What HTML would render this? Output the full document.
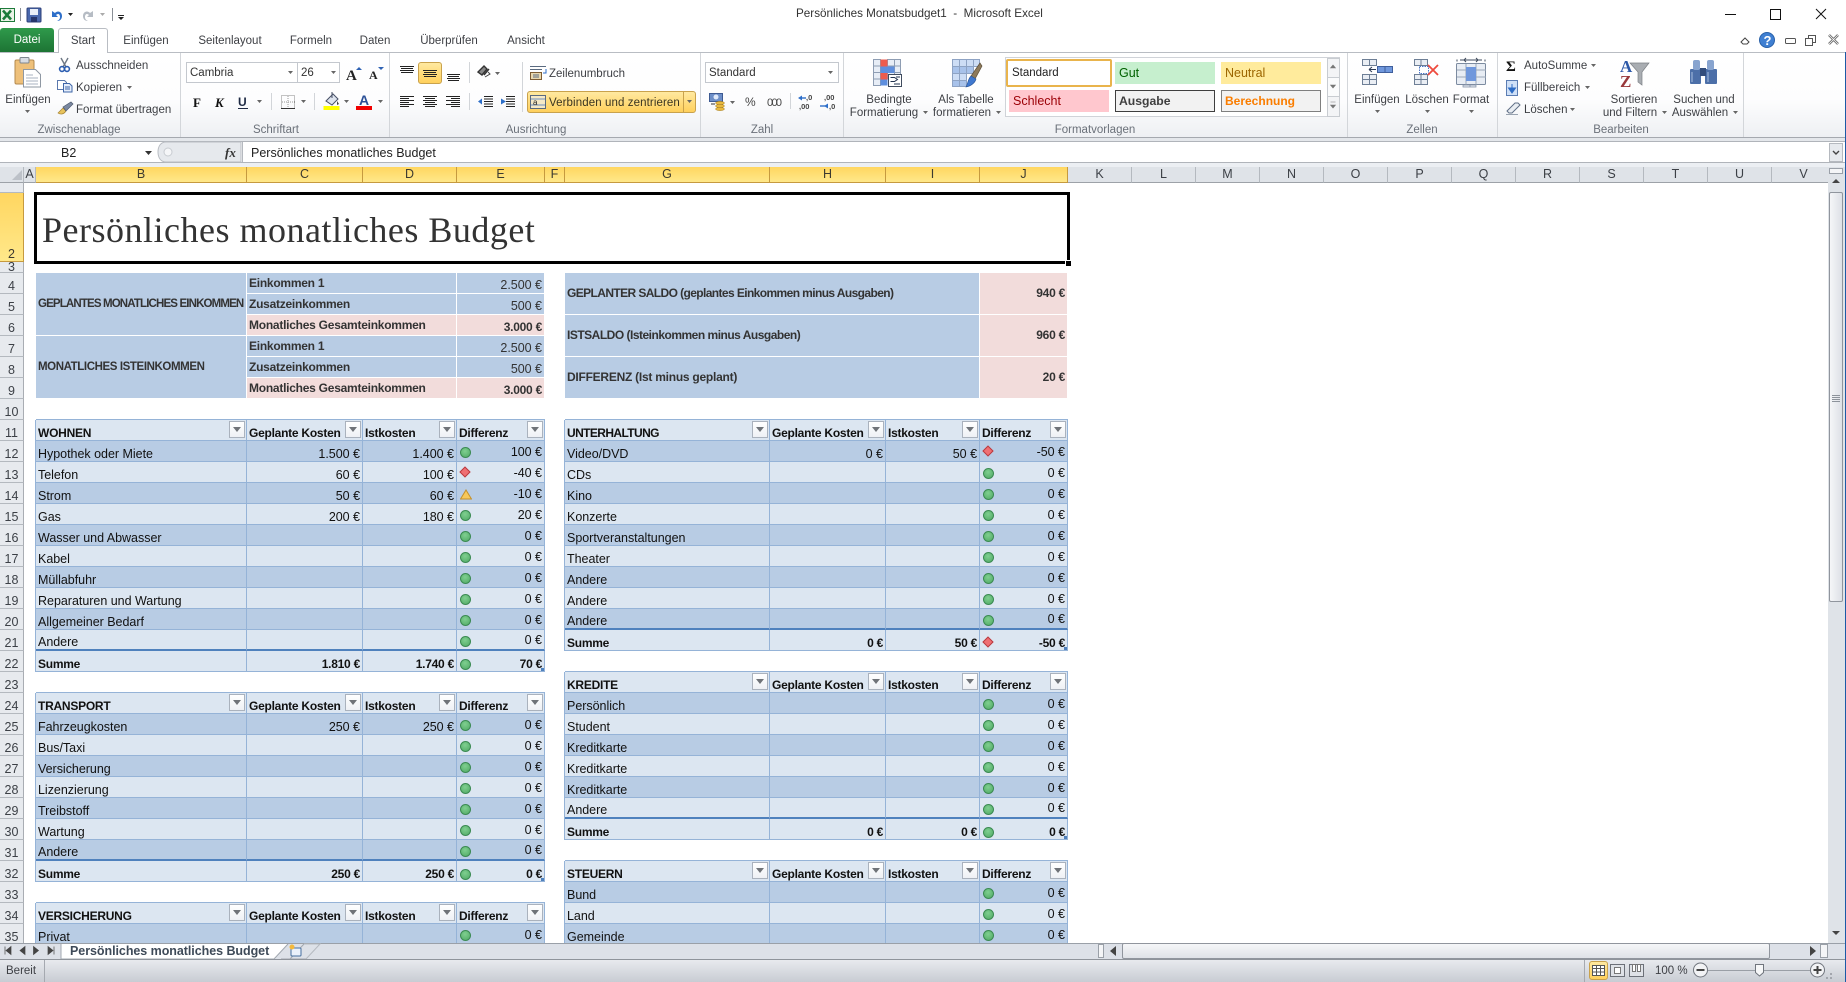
<!DOCTYPE html>
<html lang="de"><head><meta charset="utf-8"><title>Persönliches Monatsbudget1 - Microsoft Excel</title>
<style>
html,body{margin:0;padding:0;background:#fff}
body{position:relative;width:1846px;height:982px;overflow:hidden;font-family:"Liberation Sans",sans-serif;color:#222}
.abs,.t{position:absolute}
.t{white-space:nowrap;font-size:11.5px;line-height:14px;color:#3d3f44;margin-top:1px}
.n{margin-top:0}
.c{transform:translateX(-50%)}
.gl{color:#6a7079}
#rib{position:absolute;left:0;top:52px;width:1846px;height:85px;background:linear-gradient(#fff 0,#fdfdfe 55%,#eef0f3 100%);border-top:1px solid #b9bdc3;box-sizing:border-box}
.sep{position:absolute;top:53px;width:1px;height:84px;background:#d3d6da}
.box{position:absolute;background:#fff;border:1px solid #c4c8ce;box-sizing:border-box;font-size:11.5px;line-height:21px;padding-left:3px;color:#333}
.sty{position:absolute;box-sizing:border-box;font-size:12.5px;line-height:23px;padding-left:4px;width:100px;height:22px}
#sh{position:absolute;left:0;top:167px;width:1828px;height:776px;overflow:hidden;background:#fff}
table{border-collapse:separate;border-spacing:0;table-layout:fixed;width:1836px}
th,td{padding:0;box-sizing:border-box;white-space:nowrap;overflow:hidden;font-weight:normal}
tr{height:21px}
td{position:relative;font-size:12.5px;line-height:13px;vertical-align:bottom;padding:0 2px;color:#111;letter-spacing:-.02px}
.ch{height:16px;background:#dfe3e8;border-right:1px solid #b4b9bf;border-bottom:1px solid #9da2a8;text-align:center;font-size:12.5px;line-height:13px;color:#3c4046}
.rh{background:#e7eaee;border-right:1px solid #a9adb3;border-bottom:1px solid #b4b9bf;text-align:center;font-size:12.5px;color:#3c4046;vertical-align:bottom;line-height:13px}
.ch.ac,.rh.ac{background:linear-gradient(#ffd660,#ffe88a);border-right:1px solid #c69a3f;border-bottom:1px solid #c69a3f;color:#3c3a30}
.d,.l{border-right:1px solid #95b3d7;border-bottom:1px solid #95b3d7}
.d{background:#b8cce4}.l{background:#dce6f1}
.x{border-bottom:2px solid #4f81bd}
.r{text-align:right}
.b{font-weight:bold;font-size:12px;letter-spacing:-.25px}
.e{padding-bottom:2px}
.tb{border-bottom:1px solid #95b3d7;padding:0}
.al{border-right:1px solid #95b3d7;padding:0}
.s{background:#b8cce4;border-right:1px solid #fff;border-bottom:1px solid #fff;color:#333;line-height:15px}
.p{background:#f2dcdb;border-right:1px solid #fff;border-bottom:1px solid #fff;color:#333;line-height:15px}
.m{vertical-align:middle}
.f{position:absolute;right:1px;top:1px;width:16px;height:17px;box-sizing:border-box;background:linear-gradient(#fff,#eef1f5);border:1px solid #aab2bd}
.f:after{content:"";position:absolute;left:3px;top:5px;border:4px solid transparent;border-top:5px solid #6f7378;border-bottom:0}
.g{position:absolute;left:3px;top:6px;width:11px;height:11px;box-sizing:border-box;border-radius:50%;background:radial-gradient(circle at 45% 35%,#7fcf90,#4fa964);border:1px solid #3b8a52}
.su .g,.g.su{top:8px}
.q{position:absolute;left:4px;top:6px;width:8px;height:8px;box-sizing:border-box;background:#ef6f73;border:1px solid #b83b40;transform:rotate(45deg)}
.h{position:absolute;right:0;bottom:0;width:3px;height:3px;background:#4f81bd}
#sel{position:absolute;left:34px;top:192px;width:1036px;height:72px;box-sizing:border-box;border:3px solid #000;background:#fff}
#title{position:absolute;left:42px;top:208px;font-family:"Liberation Serif",serif;font-size:36px;letter-spacing:.5px;line-height:44px;color:#333;white-space:nowrap}
</style></head><body>

<div class="t n" style="left:796px;top:7px;font-size:11.7px;color:#333">Persönliches Monatsbudget1&nbsp; - &nbsp;Microsoft Excel</div>

<div id="rib"></div>
<div class="abs" style="left:0;top:28px;width:54px;height:24px;background:linear-gradient(#2f9a4b,#1d7434);border-radius:3px 3px 0 0;color:#fff;font-size:11.5px;line-height:24px;text-align:center">Datei</div>
<div class="abs" style="left:58px;top:28px;width:50px;height:25px;box-sizing:border-box;background:#fff;border:1px solid #b9bdc3;border-bottom:0;border-radius:3px 3px 0 0;font-size:11.5px;line-height:24px;text-align:center;color:#3d3f44">Start</div>
<div class="t c" style="left:146px;top:33px">Einfügen</div>
<div class="t c" style="left:230px;top:33px">Seitenlayout</div>
<div class="t c" style="left:311px;top:33px">Formeln</div>
<div class="t c" style="left:375px;top:33px">Daten</div>
<div class="t c" style="left:449px;top:33px">Überprüfen</div>
<div class="t c" style="left:526px;top:33px">Ansicht</div>

<div class="sep" style="left:180px"></div><div class="sep" style="left:389px"></div><div class="sep" style="left:700px"></div><div class="sep" style="left:843px"></div><div class="sep" style="left:1347px"></div><div class="sep" style="left:1497px"></div><div class="sep" style="left:1743px"></div>

<!-- active buttons and style boxes -->
<div class="abs" style="left:418px;top:62px;width:24px;height:22px;box-sizing:border-box;background:linear-gradient(#ffe9a0,#ffd05c);border:1px solid #c9a24c;border-radius:3px"></div>
<div class="abs" style="left:527px;top:91px;width:169px;height:22px;box-sizing:border-box;background:linear-gradient(#ffe9a0,#ffd05c);border:1px solid #c9a24c;border-radius:3px"></div>
<div class="abs" style="left:683px;top:92px;width:1px;height:20px;background:#c9a24c"></div>
<div class="box" style="left:186px;top:62px;width:112px;height:21px">Cambria</div>
<div class="box" style="left:297px;top:62px;width:43px;height:21px">26</div>
<div class="box" style="left:705px;top:62px;width:134px;height:21px">Standard</div>
<div class="abs" style="left:1005px;top:57px;width:335px;height:60px;box-sizing:border-box;background:#fff;border:1px solid #d0d3d8"></div>
<div class="sty" style="left:1006px;top:59px;width:106px;height:28px;background:#fff;border:2px solid #e9b44c;line-height:25px;padding-left:4px;color:#222;border-radius:2px;font-size:11.5px">Standard</div>
<div class="sty" style="left:1115px;top:62px;background:#c6efce;color:#006100">Gut</div>
<div class="sty" style="left:1221px;top:62px;background:#ffeb9c;color:#9c6500">Neutral</div>
<div class="sty" style="left:1009px;top:90px;background:#ffc7ce;color:#9c0006">Schlecht</div>
<div class="sty" style="left:1115px;top:90px;background:#f2f2f2;border:1px solid #3f3f3f;color:#3f3f3f;font-weight:bold;font-size:12.2px;line-height:20px;padding-left:3px">Ausgabe</div>
<div class="sty" style="left:1221px;top:90px;background:#f2f2f2;border:1px solid #7f7f7f;color:#fa7d00;font-weight:bold;font-size:12px;line-height:20px;padding-left:3px">Berechnung</div>
<div class="abs" style="left:1327px;top:58px;width:13px;height:59px;box-sizing:border-box;background:#f3f4f6;border:1px solid #c8ccd1"></div>
<div class="abs" style="left:1327px;top:77px;width:13px;height:20px;box-sizing:border-box;background:#fafbfc;border:1px solid #c8ccd1"></div>

<svg class="abs" style="left:0;top:0" width="1846" height="167" viewBox="0 0 1846 167">
<!-- quick access -->
<rect x=".5" y="8.5" width="14" height="13" fill="#eaf3e7" stroke="#1d7a3a"/><path d="M3 10.5l8 9M11 10.5l-8 9" stroke="#1b7c3b" stroke-width="2.6" fill="none"/>
<path d="M20.5 8v13M112.5 8v13" stroke="#8a8f96"/>
<rect x="27" y="8" width="14" height="14" rx="1" fill="#4a68ad" stroke="#2c3f78"/><rect x="30" y="9" width="8" height="6" fill="#e9eef8"/><rect x="31" y="17" width="6" height="5" fill="#26356a"/>
<path d="M52 11v6h6l-2-2c2-2 4-1 4 2 0 2-1 3-3 4 4 0 5-3 5-5 0-4-4-6-7-3z" fill="#2e6fc9"/>
<path d="M93 11v6h-6l2-2c-2-2-4-1-4 2 0 2 1 3 3 4-4 0-5-3-5-5 0-4 4-6 7-3z" fill="#b6bcc4"/>
<path d="M68 13h5l-2.500 3zM118 15h6v1h-6zM118 17h6l-3 3z" fill="#222"/><path d="M100 13h5l-2.500 3z" fill="#aaa"/>
<!-- paste -->
<rect x="15" y="60" width="19" height="24" rx="1.500" fill="#eec07a" stroke="#b48a4e"/><rect x="20" y="57.500" width="9" height="5.500" rx="1" fill="#d8dce2" stroke="#7f868f"/>
<path d="M23.500 69.500h12l5 5v12.500h-17z" fill="#fff" stroke="#8f98a3"/><path d="M26 75h7M26 78h12M26 81h12M26 84h12" stroke="#a9b3c0"/>
<!-- scissors -->
<path d="M61 58l5 9M68 58l-5 9" stroke="#6d7784" stroke-width="1.400"/><circle cx="62" cy="69" r="2.400" fill="none" stroke="#2a5cb0" stroke-width="1.600"/><circle cx="67" cy="69" r="2.400" fill="none" stroke="#2a5cb0" stroke-width="1.600"/>
<!-- copy -->
<path d="M57.500 80.500h7l2 2v7h-9z" fill="#fff" stroke="#5a78ad"/><path d="M63.500 83.500h6l2.500 2.500v6h-8.500z" fill="#e6eefb" stroke="#3f66a8"/><path d="M65 87h5M65 89h5" stroke="#3f66a8"/>
<!-- brush -->
<path d="M58 113l5-5 3 3c-2 3-5 4-8 2z" fill="#e8c35d" stroke="#a58232" stroke-width=".7"/><path d="M63 107l8-5 2 2-7 7z" fill="#7a88a0" stroke="#4d596e" stroke-width=".7"/>
<!-- Font -->
<text x="346" y="80" font-family="Liberation Serif,serif" font-weight="bold" font-size="15" fill="#222">A</text><path d="M356 70h6l-3-3z" fill="#2e62b4"/>
<text x="369" y="79" font-family="Liberation Serif,serif" font-weight="bold" font-size="12" fill="#222">A</text><path d="M378 67h6l-3 3z" fill="#2e62b4"/>
<text x="193" y="107" font-family="Liberation Serif,serif" font-weight="bold" font-size="13" fill="#111">F</text>
<text x="215" y="107" font-family="Liberation Serif,serif" font-weight="bold" font-style="italic" font-size="13" fill="#111">K</text>
<text x="238" y="106" font-family="Liberation Sans,sans-serif" font-weight="bold" font-size="12" fill="#1e2a44">U</text><path d="M238 108.500h10" stroke="#1e2a44"/>
<path d="M271.500 93v17M314.500 93v17M469.500 62v21M522.500 62v50M469.500 93v17M790.500 93v16" stroke="#d2d5d9"/>
<rect x="281.500" y="95.500" width="13" height="13" fill="none" stroke="#888" stroke-dasharray="1 1"/><path d="M288 96v13M282 102h13" stroke="#999" stroke-dasharray="1 1"/><path d="M281 108.500h14" stroke="#333"/>
<path d="M326 101l7-7 5 5-6 6z" fill="#dde3ee" stroke="#475066" stroke-width="1"/><path d="M332 92v6" stroke="#475066"/><path d="M337 101l2 3-2 1z" fill="#444"/><rect x="323.500" y="106" width="16" height="4" fill="#ffff00"/>
<text x="359" y="105" font-family="Liberation Sans,sans-serif" font-weight="bold" font-size="14" fill="#2a4f96">A</text><rect x="356" y="106" width="16" height="4" fill="#f00000"/>
<!-- Alignment -->
<path d="M400 66.500h14M401 68.500h12M400 70.500h14M401 72.500h12M423 70.500h14M424 72.500h12M423 74.500h14M424 76.500h12M447 74.500h13M448 76.500h11M447 78.500h13M448 80.500h11" stroke="#222" fill="none"/>
<path d="M400 96.500h14M400 98.500h9M400 100.500h14M400 102.500h9M400 104.500h14M400 106.500h9M423 96.500h14M425 98.500h10M423 100.500h14M425 102.500h10M423 104.500h14M425 106.500h10M446 96.500h14M451 98.500h9M446 100.500h14M451 102.500h9M446 104.500h14M451 106.500h9" stroke="#222" fill="none"/>
<path d="M478 72l6-6 3 3-5 6zM484 75l5-6" stroke="#333" stroke-width="1.400" fill="#888"/><path d="M485 77l5-3-2-2" fill="none" stroke="#444"/>
<path d="M484 96.500h9M484 99h9M484 101.500h9M484 104h9M484 106.500h9M506 96.500h9M506 99h9M506 101.500h9M506 104h9M506 106.500h9" stroke="#222" fill="none"/><path d="M478 101.500l4-3v6zM506 101.500l-5-3v6z" fill="#2e6fc9"/>
<!-- wrap -->
<rect x="530.500" y="72.500" width="11" height="7" fill="#e9d9b0" stroke="#7d5c32"/><path d="M530 66.500h16M530 69.500h12M533 75h6M533 77h6" stroke="#5a6a80"/><path d="M546 69v4h-3" fill="none" stroke="#2e6fc9"/>
<rect x="530.500" y="95.500" width="15" height="13" fill="#f6e9c6" stroke="#5a6a80"/><path d="M531 99h14M531 105h14" stroke="#6f8fbd"/><text x="533" y="105" font-size="8" fill="#222" font-family="Liberation Sans,sans-serif">a</text>
<!-- number -->
<rect x="709.500" y="93.500" width="13" height="8" fill="#6c8ec8" stroke="#3d5a92"/><circle cx="716" cy="97" r="2.500" fill="#dfe9fa"/><ellipse cx="720" cy="103" rx="4.500" ry="1.600" fill="#e8b93f" stroke="#a67d1f" stroke-width=".5"/><ellipse cx="720" cy="106" rx="4.500" ry="1.600" fill="#e8b93f" stroke="#a67d1f" stroke-width=".5"/><ellipse cx="720" cy="109" rx="4.500" ry="1.600" fill="#e8b93f" stroke="#a67d1f" stroke-width=".5"/><path d="M711 104h4" stroke="#333"/>
<text x="745" y="106" font-size="12" fill="#444" font-family="Liberation Sans,sans-serif">%</text>
<text x="767" y="106" font-size="11" fill="#444" font-family="Liberation Sans,sans-serif" textLength="15">000</text>
<text x="806" y="100" font-size="7.500" font-weight="bold" fill="#444" font-family="Liberation Sans,sans-serif">,0</text><text x="799" y="109" font-size="7.500" font-weight="bold" fill="#444" font-family="Liberation Sans,sans-serif">,00</text><path d="M798 98l4-2.500v5z" fill="#2e6fc9"/><path d="M802 98h4" stroke="#2e6fc9" stroke-width="1.400"/>
<text x="824" y="100" font-size="7.500" font-weight="bold" fill="#444" font-family="Liberation Sans,sans-serif">,00</text><text x="829" y="109" font-size="7.500" font-weight="bold" fill="#444" font-family="Liberation Sans,sans-serif">,0</text><path d="M828 106l-4-2.500v5z" fill="#2e6fc9" transform="translate(0 0) rotate(180 826 106)"/><path d="M820 106h5" stroke="#2e6fc9" stroke-width="1.400"/>
<!-- conditional -->
<g stroke="#8e9db3" fill="#e7edf6"><rect x="873.500" y="59.500" width="7" height="6.500"/><rect x="873.500" y="66" width="7" height="6.500"/><rect x="873.500" y="72.500" width="7" height="6.500"/><rect x="873.500" y="79" width="7" height="6.500"/><rect x="887.500" y="59.500" width="7" height="6.500"/><rect x="894.500" y="59.500" width="6" height="6.500"/><rect x="887.500" y="66" width="7" height="6.500"/><rect x="894.500" y="66" width="6" height="6.500"/><rect x="887.500" y="72.500" width="7" height="6.500"/><rect x="894.500" y="72.500" width="6" height="6.500"/></g>
<rect x="880.500" y="59.500" width="7" height="7" fill="#ee5c4d"/><rect x="880.500" y="66.500" width="7" height="13" fill="#5f8fde" /><rect x="887.500" y="66.500" width="7" height="6.500" fill="#5f8fde"/><rect x="880.500" y="73" width="7" height="6.500" fill="#ee5c4d"/><rect x="880.500" y="79.500" width="7" height="6" fill="#5f8fde"/>
<rect x="888.500" y="74.500" width="13" height="12" fill="#fff" stroke="#3f4b5e"/><path d="M890.500 77.500h4l3 2-3 2h-4M894 84h6M896 77h4" stroke="#22334f" fill="none"/>
<!-- table style -->
<g stroke="#8ea3c4" fill="#cdddf5"><rect x="952.500" y="59.500" width="7" height="7"/><rect x="959.500" y="59.500" width="7" height="7"/><rect x="966.500" y="59.500" width="7" height="7"/><rect x="973.500" y="59.500" width="6" height="7"/><rect x="952.500" y="66.500" width="7" height="7" fill="#a8c2ea"/><rect x="959.500" y="66.500" width="7" height="7" fill="#a8c2ea"/><rect x="966.500" y="66.500" width="7" height="7" fill="#a8c2ea"/><rect x="952.500" y="73.500" width="7" height="7"/><rect x="959.500" y="73.500" width="7" height="7"/><rect x="952.500" y="80.500" width="7" height="6" fill="#a8c2ea"/><rect x="959.500" y="80.500" width="7" height="6" fill="#a8c2ea"/></g>
<path d="M980 63l-9 13 4 3 7-13z" fill="#8d7a5c" stroke="#5d4f3a" stroke-width=".7"/><path d="M971 76c-3 3-3 7-5 11 5-1 9-4 10-8z" fill="#3f78cf" stroke="#275296" stroke-width=".6"/>
<!-- gallery arrows -->
<path d="M1330.500 68h5l-2.500-3zM1330.500 85l5 0-2.500 3zM1330.500 105h5l-2.500 3zM1330.500 102h5" fill="#777" stroke="#777" stroke-width=".6"/>
<!-- Cells insert -->
<g fill="#eaeef4" stroke="#6e7f96"><rect x="1362.500" y="59.500" width="14" height="6"/><path d="M1369.500 59.500v6"/><rect x="1362.500" y="74.500" width="14" height="10"/><path d="M1369.500 74.500v10M1362.500 79.500h14"/><rect x="1377.500" y="66.500" width="15" height="6" fill="#6f97dc" stroke="#3f5f9c"/><path d="M1385 66.500v6" stroke="#3f5f9c"/>
<rect x="1414.500" y="59.500" width="13" height="6"/><path d="M1421 59.500v6"/><rect x="1414.500" y="74.500" width="13" height="10"/><path d="M1421 74.500v10M1414.500 79.500h13"/></g>
<path d="M1369 69.500h7M1369 69.500l3-2.500M1369 69.500l3 2.500" stroke="#2b3a55" fill="none"/>
<rect x="1419.500" y="66.500" width="9" height="7" fill="#fff" stroke="#4976c8" stroke-dasharray="1.500 1"/>
<path d="M1428 65l10 10M1438 65l-10 10" stroke="#ee4a3e" stroke-width="1.800"/>
<!-- Format -->
<rect x="1456.500" y="63.500" width="29" height="21" fill="#e8edf4" stroke="#7c8ba0" rx="1"/><path d="M1466 64v21M1476 64v21M1457 70h29M1457 77h29" stroke="#9aa7b9"/><rect x="1466" y="67" width="10" height="14" fill="#6f97dc"/><path d="M1457 59.500v2M1485 59.500v2M1460 60h22M1466 58l-2 2 2 2M1476 58l2 2-2 2" stroke="#3e4a5c" fill="none"/><path d="M1463 85h7v2h-7zM1470 85h6v2h-6z" fill="#e8edf4" stroke="#7c8ba0" stroke-width=".7"/>
<!-- Edit -->
<text x="1506" y="71" font-family="Liberation Serif,serif" font-weight="bold" font-size="15" fill="#111">Σ</text>
<rect x="1506.500" y="80.500" width="11" height="15" fill="#cfe0f7" stroke="#5b7db3"/><path d="M1512 84v5M1508.500 88h7l-3.500 5z" fill="#2d6cc5" stroke="#2d6cc5"/>
<path d="M1507 111l8-8h3l2 2-8 8h-3z" fill="#e9edf2" stroke="#606f86"/><path d="M1506 114.500h12" stroke="#99a3b0"/>
<text x="1620" y="72" font-family="Liberation Serif,serif" font-weight="bold" font-size="17" fill="#2d58a8">A</text><text x="1620" y="87" font-family="Liberation Serif,serif" font-weight="bold" font-size="17" fill="#99383a">Z</text>
<path d="M1630 63h19l-7 9v13l-4-3v-10z" fill="#a9adb2" stroke="#7c8085" stroke-width=".7"/>
<rect x="1690" y="69" width="11" height="15" rx="1" fill="#4c6fa8"/><rect x="1705" y="69" width="12" height="15" rx="1" fill="#4c6fa8"/><rect x="1693" y="60" width="7" height="10" rx="2" fill="#88a4cf"/><rect x="1707" y="60" width="7" height="10" rx="2" fill="#88a4cf"/><rect x="1700" y="68" width="6" height="8" fill="#324d7c"/><path d="M1692 72v10M1708 72v10" stroke="#a9bfe0"/>
<!-- tiny arrows -->
<path d="M127 86h5l-2.500 3zM25 110h5l-2.500 3zM288 71h5l-2.500 3zM331 71h5l-2.500 3zM257 100h5l-2.500 3zM301 100h5l-2.500 3zM344 100h5l-2.500 3zM378 100h5l-2.500 3zM495 72h5l-2.500 3zM828 71h5l-2.500 3zM730 101h5l-2.500 3zM923 111h5l-2.500 3zM996 111h5l-2.500 3zM1375 110h5l-2.500 3zM1425 110h5l-2.500 3zM1469 110h5l-2.500 3zM1591 64h5l-2.500 3zM1585 86h5l-2.500 3zM1570 108h5l-2.500 3zM1662 111h5l-2.500 3zM1733 111h5l-2.500 3zM687 100h5l-2.500 3z" fill="#666"/>
<!-- window controls -->
<path d="M1725 14.500h11M1770.500 9.500h10v10h-10zM1816 9l10 10M1826 9l-10 10" stroke="#111" fill="none"/>
<path d="M1741 42l4-4 4 4-2 2h-4z" fill="none" stroke="#444"/>
<circle cx="1767" cy="40" r="7.500" fill="#3f7fd2" stroke="#2860a8"/><text x="1763.500" y="45" font-family="Liberation Sans,sans-serif" font-weight="bold" font-size="13" fill="#fff">?</text>
<rect x="1785.500" y="38.500" width="10" height="5" rx="1" fill="none" stroke="#555"/>
<rect x="1808.500" y="35.500" width="7" height="7" fill="#fff" stroke="#555"/><rect x="1805.500" y="38.500" width="7" height="7" fill="#fff" stroke="#555"/>
<path d="M1829 35l9 9M1838 35l-9 9" stroke="#666" stroke-width="2.500"/><path d="M1829 35l9 9M1838 35l-9 9" stroke="#fff" stroke-width=".8"/>
<!-- formula bar -->
<path d="M0 137.500h1846" stroke="#a5a9af"/><rect x="0" y="138" width="1846" height="3" fill="#e4e7eb"/><path d="M0 141.500h1846M0 162.500h1846" stroke="#b0b4ba"/>
<rect x="0" y="163" width="1846" height="4" fill="#eceff3"/>
<path d="M158 152c0-6 3-10 8-10h75v20h-75c-5 0-8-4-8-10z" fill="#e6e9ed" stroke="#b9bdc3"/>
<circle cx="168" cy="152" r="4" fill="#f5f6f8" stroke="#c8ccd1"/>
<path d="M145 151h7l-3.500 4z" fill="#333"/>
<text x="225" y="157" font-family="Liberation Serif,serif" font-style="italic" font-weight="bold" font-size="13" fill="#333">fx</text>
<path d="M242.500 142v20" stroke="#b5b9bf"/>
<rect x="1829.500" y="143.500" width="13" height="18" fill="#e7eaee" stroke="#b5b9bf"/><path d="M1833 151l3 3 3-3" fill="none" stroke="#444" stroke-width="1.400"/>
</svg>

<div class="t" style="left:76px;top:58px">Ausschneiden</div>
<div class="t" style="left:76px;top:80px">Kopieren</div>
<div class="t" style="left:76px;top:102px">Format übertragen</div>
<div class="t c" style="left:28px;top:92px">Einfügen</div>
<div class="t c gl" style="left:79px;top:122px">Zwischenablage</div>
<div class="t c gl" style="left:276px;top:122px">Schriftart</div>
<div class="t c gl" style="left:536px;top:122px">Ausrichtung</div>
<div class="t c gl" style="left:762px;top:122px">Zahl</div>
<div class="t c gl" style="left:1095px;top:122px">Formatvorlagen</div>
<div class="t c gl" style="left:1422px;top:122px">Zellen</div>
<div class="t c gl" style="left:1621px;top:122px">Bearbeiten</div>
<div class="t" style="left:549px;top:66px">Zeilenumbruch</div>
<div class="t" style="left:549px;top:95px;color:#3a3420;letter-spacing:.1px">Verbinden und zentrieren</div>
<div class="t c" style="left:889px;top:92px">Bedingte</div>
<div class="t c" style="left:884px;top:105px">Formatierung</div>
<div class="t c" style="left:966px;top:92px">Als Tabelle</div>
<div class="t c" style="left:962px;top:105px">formatieren</div>
<div class="t c" style="left:1377px;top:92px">Einfügen</div>
<div class="t c" style="left:1427px;top:92px">Löschen</div>
<div class="t c" style="left:1471px;top:92px">Format</div>
<div class="t" style="left:1524px;top:58px">AutoSumme</div>
<div class="t" style="left:1524px;top:80px">Füllbereich</div>
<div class="t" style="left:1524px;top:102px">Löschen</div>
<div class="t c" style="left:1634px;top:92px">Sortieren</div>
<div class="t c" style="left:1630px;top:105px">und Filtern</div>
<div class="t c" style="left:1704px;top:92px">Suchen und</div>
<div class="t c" style="left:1700px;top:105px">Auswählen</div>
<div class="t n" style="left:61px;top:146px;font-size:12.500px;color:#222">B2</div>
<div class="t n" style="left:251px;top:146px;font-size:12.500px;color:#222">Persönliches monatliches Budget</div>

<div id="sh">
<table>
<colgroup><col style="width:24px"><col style="width:12px"><col style="width:211px"><col style="width:116px"><col style="width:94px"><col style="width:88px"><col style="width:20px"><col style="width:205px"><col style="width:116px"><col style="width:94px"><col style="width:88px"><col span="12" style="width:64px"></colgroup>
<tr style="height:16px"><th class="ch"><svg width="14" height="14" style="display:block;margin-left:9px"><path d="M13 2v10H3z" fill="#bcc1c8"/></svg></th><th class="ch">A</th><th class="ch ac">B</th><th class="ch ac">C</th><th class="ch ac">D</th><th class="ch ac">E</th><th class="ch ac">F</th><th class="ch ac">G</th><th class="ch ac">H</th><th class="ch ac">I</th><th class="ch ac">J</th><th class="ch">K</th><th class="ch">L</th><th class="ch">M</th><th class="ch">N</th><th class="ch">O</th><th class="ch">P</th><th class="ch">Q</th><th class="ch">R</th><th class="ch">S</th><th class="ch">T</th><th class="ch">U</th><th class="ch">V</th></tr>
<tr style="height:10px"><th class="rh" style="line-height:9px;font-size:1px">&nbsp;</th></tr>
<tr style="height:69px"><th class="rh ac">2</th></tr>
<tr style="height:11px"><th class="rh" style="line-height:10px">3</th></tr>
<tr><th class="rh">4</th><td></td><td class="s b m" rowspan="3" style="font-size:11.5px;letter-spacing:-.85px">GEPLANTES MONATLICHES EINKOMMEN</td><td class="s b m" colspan="2">Einkommen 1</td><td class="s r">2.500 €</td><td></td><td class="s b m" colspan="3" rowspan="2" style="letter-spacing:-.6px">GEPLANTER SALDO (geplantes Einkommen minus Ausgaben)</td><td class="p b m r" rowspan="2">940 €</td></tr>
<tr><th class="rh">5</th><td></td><td class="s b m" colspan="2">Zusatzeinkommen</td><td class="s r">500 €</td><td></td></tr>
<tr><th class="rh">6</th><td></td><td class="p b m" colspan="2">Monatliches Gesamteinkommen</td><td class="p r b">3.000 €</td><td></td><td class="s b m" colspan="3" rowspan="2" style="letter-spacing:-.5px">ISTSALDO (Isteinkommen minus Ausgaben)</td><td class="p b m r" rowspan="2">960 €</td></tr>
<tr><th class="rh">7</th><td></td><td class="s b m" rowspan="3" style="font-size:11.5px;letter-spacing:-.4px">MONATLICHES ISTEINKOMMEN</td><td class="s b m" colspan="2">Einkommen 1</td><td class="s r">2.500 €</td><td></td></tr>
<tr><th class="rh">8</th><td></td><td class="s b m" colspan="2">Zusatzeinkommen</td><td class="s r">500 €</td><td></td><td class="s b m" colspan="3" rowspan="2">DIFFERENZ (Ist minus geplant)</td><td class="p b m r" rowspan="2">20 €</td></tr>
<tr><th class="rh">9</th><td></td><td class="p b m" colspan="2">Monatliches Gesamteinkommen</td><td class="p r b">3.000 €</td><td></td></tr>
<tr><th class="rh">10</th><td></td><td class="tb"></td><td class="tb"></td><td class="tb"></td><td class="tb"></td><td></td><td class="tb"></td><td class="tb"></td><td class="tb"></td><td class="tb"></td></tr>
<tr><th class="rh">11</th><td class="al"></td><td class="l b">WOHNEN<i class="f"></i></td><td class="l b">Geplante Kosten<i class="f"></i></td><td class="l b">Istkosten<i class="f"></i></td><td class="l b">Differenz<i class="f"></i></td><td class="al"></td><td class="l b" style="letter-spacing:-.6px">UNTERHALTUNG<i class="f"></i></td><td class="l b">Geplante Kosten<i class="f"></i></td><td class="l b">Istkosten<i class="f"></i></td><td class="l b">Differenz<i class="f"></i></td></tr>
<tr><th class="rh">12</th><td class="al"></td><td class="d">Hypothek oder Miete</td><td class="d r">1.500 €</td><td class="d r">1.400 €</td><td class="d r e"><i class="g"></i>100 €</td><td class="al"></td><td class="d">Video/DVD</td><td class="d r">0 €</td><td class="d r">50 €</td><td class="d r e"><i class="q"></i>-50 €</td></tr>
<tr><th class="rh">13</th><td class="al"></td><td class="l">Telefon</td><td class="l r">60 €</td><td class="l r">100 €</td><td class="l r e"><i class="q"></i>-40 €</td><td class="al"></td><td class="l">CDs</td><td class="l"></td><td class="l"></td><td class="l r e"><i class="g"></i>0 €</td></tr>
<tr><th class="rh">14</th><td class="al"></td><td class="d">Strom</td><td class="d r">50 €</td><td class="d r">60 €</td><td class="d r e"><svg width="12" height="11" style="position:absolute;left:3px;top:6px"><path d="M6 1L11.500 10H.5z" fill="#f7c85a" stroke="#c4902a"/></svg>-10 €</td><td class="al"></td><td class="d">Kino</td><td class="d"></td><td class="d"></td><td class="d r e"><i class="g"></i>0 €</td></tr>
<tr><th class="rh">15</th><td class="al"></td><td class="l">Gas</td><td class="l r">200 €</td><td class="l r">180 €</td><td class="l r e"><i class="g"></i>20 €</td><td class="al"></td><td class="l">Konzerte</td><td class="l"></td><td class="l"></td><td class="l r e"><i class="g"></i>0 €</td></tr>
<tr><th class="rh">16</th><td class="al"></td><td class="d">Wasser und Abwasser</td><td class="d"></td><td class="d"></td><td class="d r e"><i class="g"></i>0 €</td><td class="al"></td><td class="d">Sportveranstaltungen</td><td class="d"></td><td class="d"></td><td class="d r e"><i class="g"></i>0 €</td></tr>
<tr><th class="rh">17</th><td class="al"></td><td class="l">Kabel</td><td class="l"></td><td class="l"></td><td class="l r e"><i class="g"></i>0 €</td><td class="al"></td><td class="l">Theater</td><td class="l"></td><td class="l"></td><td class="l r e"><i class="g"></i>0 €</td></tr>
<tr><th class="rh">18</th><td class="al"></td><td class="d">Müllabfuhr</td><td class="d"></td><td class="d"></td><td class="d r e"><i class="g"></i>0 €</td><td class="al"></td><td class="d">Andere</td><td class="d"></td><td class="d"></td><td class="d r e"><i class="g"></i>0 €</td></tr>
<tr><th class="rh">19</th><td class="al"></td><td class="l">Reparaturen und Wartung</td><td class="l"></td><td class="l"></td><td class="l r e"><i class="g"></i>0 €</td><td class="al"></td><td class="l">Andere</td><td class="l"></td><td class="l"></td><td class="l r e"><i class="g"></i>0 €</td></tr>
<tr><th class="rh">20</th><td class="al"></td><td class="d">Allgemeiner Bedarf</td><td class="d"></td><td class="d"></td><td class="d r e"><i class="g"></i>0 €</td><td class="al"></td><td class="d x">Andere</td><td class="d x"></td><td class="d x"></td><td class="d x r e"><i class="g"></i>0 €</td></tr>
<tr><th class="rh">21</th><td class="al"></td><td class="l x">Andere</td><td class="l x"></td><td class="l x"></td><td class="l x r e"><i class="g"></i>0 €</td><td class="al"></td><td class="l b">Summe</td><td class="l r b">0 €</td><td class="l r b">50 €</td><td class="l r b"><i class="q" style="top:8px"></i>-50 €<i class="h"></i></td></tr>
<tr><th class="rh">22</th><td class="al"></td><td class="l b">Summe</td><td class="l r b">1.810 €</td><td class="l r b">1.740 €</td><td class="l r b su"><i class="g"></i>70 €<i class="h"></i></td><td></td><td class="tb"></td><td class="tb"></td><td class="tb"></td><td class="tb"></td></tr>
<tr><th class="rh">23</th><td></td><td class="tb"></td><td class="tb"></td><td class="tb"></td><td class="tb"></td><td class="al"></td><td class="l b">KREDITE<i class="f"></i></td><td class="l b">Geplante Kosten<i class="f"></i></td><td class="l b">Istkosten<i class="f"></i></td><td class="l b">Differenz<i class="f"></i></td></tr>
<tr><th class="rh">24</th><td class="al"></td><td class="l b">TRANSPORT<i class="f"></i></td><td class="l b">Geplante Kosten<i class="f"></i></td><td class="l b">Istkosten<i class="f"></i></td><td class="l b">Differenz<i class="f"></i></td><td class="al"></td><td class="d">Persönlich</td><td class="d"></td><td class="d"></td><td class="d r e"><i class="g"></i>0 €</td></tr>
<tr><th class="rh">25</th><td class="al"></td><td class="d">Fahrzeugkosten</td><td class="d r">250 €</td><td class="d r">250 €</td><td class="d r e"><i class="g"></i>0 €</td><td class="al"></td><td class="l">Student</td><td class="l"></td><td class="l"></td><td class="l r e"><i class="g"></i>0 €</td></tr>
<tr><th class="rh">26</th><td class="al"></td><td class="l">Bus/Taxi</td><td class="l"></td><td class="l"></td><td class="l r e"><i class="g"></i>0 €</td><td class="al"></td><td class="d">Kreditkarte</td><td class="d"></td><td class="d"></td><td class="d r e"><i class="g"></i>0 €</td></tr>
<tr><th class="rh">27</th><td class="al"></td><td class="d">Versicherung</td><td class="d"></td><td class="d"></td><td class="d r e"><i class="g"></i>0 €</td><td class="al"></td><td class="l">Kreditkarte</td><td class="l"></td><td class="l"></td><td class="l r e"><i class="g"></i>0 €</td></tr>
<tr><th class="rh">28</th><td class="al"></td><td class="l">Lizenzierung</td><td class="l"></td><td class="l"></td><td class="l r e"><i class="g"></i>0 €</td><td class="al"></td><td class="d">Kreditkarte</td><td class="d"></td><td class="d"></td><td class="d r e"><i class="g"></i>0 €</td></tr>
<tr><th class="rh">29</th><td class="al"></td><td class="d">Treibstoff</td><td class="d"></td><td class="d"></td><td class="d r e"><i class="g"></i>0 €</td><td class="al"></td><td class="l x">Andere</td><td class="l x"></td><td class="l x"></td><td class="l x r e"><i class="g"></i>0 €</td></tr>
<tr><th class="rh">30</th><td class="al"></td><td class="l">Wartung</td><td class="l"></td><td class="l"></td><td class="l r e"><i class="g"></i>0 €</td><td class="al"></td><td class="l b">Summe</td><td class="l r b">0 €</td><td class="l r b">0 €</td><td class="l r b su"><i class="g"></i>0 €<i class="h"></i></td></tr>
<tr><th class="rh">31</th><td class="al"></td><td class="d x">Andere</td><td class="d x"></td><td class="d x"></td><td class="d x r e"><i class="g"></i>0 €</td><td></td><td class="tb"></td><td class="tb"></td><td class="tb"></td><td class="tb"></td></tr>
<tr><th class="rh">32</th><td class="al"></td><td class="l b">Summe</td><td class="l r b">250 €</td><td class="l r b">250 €</td><td class="l r b su"><i class="g"></i>0 €<i class="h"></i></td><td class="al"></td><td class="l b">STEUERN<i class="f"></i></td><td class="l b">Geplante Kosten<i class="f"></i></td><td class="l b">Istkosten<i class="f"></i></td><td class="l b">Differenz<i class="f"></i></td></tr>
<tr><th class="rh">33</th><td></td><td class="tb"></td><td class="tb"></td><td class="tb"></td><td class="tb"></td><td class="al"></td><td class="d">Bund</td><td class="d"></td><td class="d"></td><td class="d r e"><i class="g"></i>0 €</td></tr>
<tr><th class="rh">34</th><td class="al"></td><td class="l b">VERSICHERUNG<i class="f"></i></td><td class="l b">Geplante Kosten<i class="f"></i></td><td class="l b">Istkosten<i class="f"></i></td><td class="l b">Differenz<i class="f"></i></td><td class="al"></td><td class="l">Land</td><td class="l"></td><td class="l"></td><td class="l r e"><i class="g"></i>0 €</td></tr>
<tr><th class="rh">35</th><td class="al"></td><td class="d">Privat</td><td class="d"></td><td class="d"></td><td class="d r e"><i class="g"></i>0 €</td><td class="al"></td><td class="d">Gemeinde</td><td class="d"></td><td class="d"></td><td class="d r e"><i class="g"></i>0 €</td></tr>
</table>
</div>

<div id="sel"></div>
<div class="abs" style="left:1065px;top:260px;width:5px;height:5px;background:#000;border:1px solid #fff"></div>
<div id="title">Persönliches monatliches Budget</div>

<!-- vertical scrollbar -->
<div class="abs" style="left:1828px;top:167px;width:17px;height:776px;background:#dfe3e8"></div>
<div class="abs" style="left:1829px;top:168px;width:14px;height:6px;box-sizing:border-box;background:#f4f5f7;border:1px solid #9aa0a8"></div>
<div class="abs" style="left:1829px;top:192px;width:14px;height:410px;box-sizing:border-box;background:linear-gradient(90deg,#f5f6f8,#dde0e6);border:1px solid #90959d;border-radius:2px"></div>
<svg class="abs" style="left:1828px;top:167px" width="17" height="776"><path d="M4 16h8l-4-4zM4 764h8l-4 4z" fill="#444"/><path d="M4 228.500h8M4 230.500h8M4 232.500h8M4 234.500h8" stroke="#8d939b"/></svg>
<div class="abs" style="left:1845px;top:52px;width:1px;height:930px;background:#1c5aa6"></div>

<!-- sheet tabs -->
<div class="abs" style="left:0;top:943px;width:1845px;height:16px;box-sizing:border-box;background:#dde1e8;border-top:1px solid #9aa0a8"></div>
<svg class="abs" style="left:0;top:943px" width="340" height="17">
<path d="M61 1H288l-14 15H61z" fill="#fff"/><path d="M61 1V16H274L288 1M290 16l14-15M307 16h-26" stroke="#a2a8b0" fill="none"/><path d="M304 1h16l-14 15" fill="none" stroke="#b5bac1"/>
<path d="M5 3.500v8M11 3.500l-5 4 5 4zM25 3.500l-5 4 5 4zM33.500 3.500l5 4-5 4zM48 3.500l5 4-5 4zM54 3.500v8" fill="#444" stroke="#444" stroke-width=".7"/>
<rect x="291" y="5" width="10" height="8" rx="1" fill="#eaf1fb" stroke="#47709f"/><circle cx="292" cy="4" r="2.500" fill="#f4b93c"/>
</svg>
<div class="t n" style="left:70px;top:944px;font-size:12.500px;font-weight:bold;color:#3e4a58;letter-spacing:-.05px">Persönliches monatliches Budget</div>

<!-- horizontal scrollbar -->
<div class="abs" style="left:1098px;top:944px;width:6px;height:14px;box-sizing:border-box;background:#f4f5f7;border:1px solid #9aa0a8"></div>
<svg class="abs" style="left:1108px;top:945px" width="10" height="12"><path d="M8 1v10L2 6z" fill="#444"/></svg>
<div class="abs" style="left:1122px;top:943px;width:648px;height:16px;box-sizing:border-box;background:linear-gradient(#f5f6f8,#dfe2e7);border:1px solid #90959d;border-radius:2px"></div>
<svg class="abs" style="left:1808px;top:945px" width="10" height="12"><path d="M2 1v10l6-5z" fill="#444"/></svg>
<div class="abs" style="left:1820px;top:944px;width:8px;height:14px;box-sizing:border-box;background:#f4f5f7;border:1px solid #9aa0a8"></div>

<!-- status bar -->
<div class="abs" style="left:0;top:959px;width:1845px;height:23px;box-sizing:border-box;background:linear-gradient(#e8eaee,#c8ccd3);border-top:1px solid #8f949b"></div>
<div class="t" style="left:6px;top:963px;font-size:11.500px">Bereit</div>
<div class="abs" style="left:44px;top:960px;width:1px;height:22px;background:#a5a9b0"></div>
<div class="abs" style="left:1584px;top:960px;width:1px;height:22px;background:#a5a9b0"></div>
<div class="abs" style="left:1589px;top:961px;width:19px;height:19px;box-sizing:border-box;background:linear-gradient(#ffe9a0,#ffd05c);border:1px solid #c9a24c;border-radius:3px"></div>
<svg class="abs" style="left:1585px;top:959px" width="250" height="23">
<rect x="7.500" y="6.500" width="12" height="10" fill="#fff" stroke="#555"/><path d="M7.500 9.500h12M7.500 13h12M11.500 6.500v10M15.500 6.500v10" stroke="#555"/>
<rect x="25.500" y="5.500" width="14" height="12" fill="#dfe2e7" stroke="#6c7078"/><rect x="29.500" y="8.500" width="6" height="6" fill="#fff" stroke="#777"/>
<rect x="44.500" y="5.500" width="14" height="12" fill="#dfe2e7" stroke="#6c7078"/><rect x="47.500" y="5.500" width="3" height="7" fill="#fff" stroke="#777"/><rect x="52.500" y="5.500" width="3" height="7" fill="#fff" stroke="#777"/>
<circle cx="115.500" cy="11" r="7" fill="#f2f3f5" stroke="#70757d"/><path d="M111.500 11h8" stroke="#444" stroke-width="2"/>
<path d="M123 11.500h102" stroke="#9a9fa6"/>
<path d="M170.500 5.500h8v8l-4 3.500-4-3.500z" fill="#f6f7f8" stroke="#70757d"/>
<circle cx="232.500" cy="11" r="7" fill="#f2f3f5" stroke="#70757d"/><path d="M228.500 11h8M232.500 7v8" stroke="#444" stroke-width="2"/>
<path d="M245 18h2v2h-2zM245 14h2v2h-2zM241 18h2v2h-2z" fill="#a2a6ad"/>
</svg>
<div class="t" style="left:1655px;top:963px;font-size:11.500px">100 %</div>
</body></html>
